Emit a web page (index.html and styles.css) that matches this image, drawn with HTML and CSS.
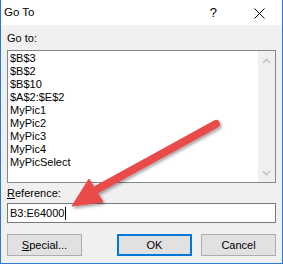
FILE: index.html
```html
<!DOCTYPE html>
<html lang="en">
<head>
    <meta charset="UTF-8">
    <title>Go To</title>
    <link rel="stylesheet" href="styles.css">
</head>
<body>

<div class="dialog">

    <div class="titlebar">
        <span class="title">Go To</span>
        <span class="help">?</span>
        <svg class="close" width="11" height="11" viewBox="0 0 11 11">
            <path d="M0.5 0.5 L10.5 10.5 M10.5 0.5 L0.5 10.5" stroke="#000" stroke-width="1" fill="none"/>
        </svg>
    </div>

    <div class="content">

        <div class="label label-top">Go to:</div>

        <div class="listbox">
            <ul class="items">
                <li>$B$3</li>
                <li>$B$2</li>
                <li>$B$10</li>
                <li>$A$2:$E$2</li>
                <li>MyPic1</li>
                <li>MyPic2</li>
                <li>MyPic3</li>
                <li>MyPic4</li>
                <li>MyPicSelect</li>
            </ul>
            <div class="scrollbar">
                <svg width="9" height="6" viewBox="0 0 9 6">
                    <path d="M1 5 L4.5 1.5 L8 5" stroke="#c5c5c5" stroke-width="1.6" fill="none"/>
                </svg>
                <svg width="9" height="6" viewBox="0 0 9 6">
                    <path d="M1 1 L4.5 4.5 L8 1" stroke="#c5c5c5" stroke-width="1.6" fill="none"/>
                </svg>
            </div>
        </div>

        <div class="label label-ref"><u>R</u>eference:</div>

        <div class="ref-input">B3:E64000<span class="caret"></span></div>

        <div class="buttons">
            <button class="btn"><u>S</u>pecial...</button>
            <div class="btn-group">
                <button class="btn btn-default">OK</button>
                <button class="btn">Cancel</button>
            </div>
        </div>

    </div>

    <!-- red callout arrow drawn over the dialog -->
    <svg class="arrow" width="283" height="264" viewBox="0 0 283 264">
        <defs>
            <filter id="shadow" x="-20%" y="-20%" width="140%" height="140%">
                <feDropShadow dx="1.5" dy="2" stdDeviation="1.5" flood-color="#000" flood-opacity="0.35"/>
            </filter>
        </defs>
        <g filter="url(#shadow)" fill="#e84b48" stroke="#e84b48">
            <line x1="216" y1="124" x2="94" y2="191" stroke-width="8" stroke-linecap="round"/>
            <polygon points="72,206 89,179 103,202" stroke-width="1" stroke-linejoin="round"/>
        </g>
    </svg>

</div>

</body>
</html>
```

FILE: styles.css
```css
body {
    margin: 0;
    font-family: "Liberation Sans", Arial, sans-serif;
    font-size: 11px;
    color: #000;
}

.dialog {
    position: relative;
    width: 283px;
    height: 264px;
    box-sizing: border-box;
    border: 1px solid #2b79d6;
    border-top: none;
    background-color: #f0f0f0;
}

.titlebar {
    display: flex;
    align-items: center;
    height: 25px;
    background-color: #fff;
    padding-left: 3px;
}

.title {
    flex: 1;
    font-size: 11.5px;
    line-height: 25px;
}

.help {
    font-size: 13px;
    line-height: 25px;
    margin-right: 37px;
}

.close {
    margin-right: 17px;
    margin-top: 1px;
}

.content {
    padding: 6px 6px 0 6px;
}

.label {
    line-height: 15px;
}

.label-top {
    margin-bottom: 4px;
}

.listbox {
    display: flex;
    height: 133px;
    box-sizing: border-box;
    border: 1px solid #828790;
    background-color: #fff;
}

.items {
    flex: 1;
    list-style: none;
    margin: 0;
    padding: 1px 0 0 2px;
}

.items li {
    line-height: 13px;
    height: 13px;
}

.scrollbar {
    width: 17px;
    background-color: #f0f0f0;
    display: flex;
    flex-direction: column;
    justify-content: space-between;
    align-items: center;
    padding: 7px 0 6px 0;
}

.label-ref {
    margin-top: 3px;
    margin-bottom: 2px;
}

.ref-input {
    display: flex;
    align-items: center;
    height: 20px;
    box-sizing: border-box;
    border: 1px solid #7a7a7a;
    background-color: #fff;
    padding-left: 2px;
}

.caret {
    display: inline-block;
    width: 1px;
    height: 13px;
    margin-left: 1px;
    background-color: #000;
}

.buttons {
    display: flex;
    justify-content: space-between;
    margin-top: 11px;
}

.btn-group {
    display: flex;
    gap: 9px;
}

.btn {
    width: 75px;
    height: 22px;
    box-sizing: border-box;
    border: 1px solid #adadad;
    background-color: #e1e1e1;
    font-family: inherit;
    font-size: 11px;
    color: #000;
    padding: 0;
}

.btn-default {
    border: 2px solid #0078d7;
}

.arrow {
    position: absolute;
    left: -1px;
    top: 0;
    pointer-events: none;
}
```
